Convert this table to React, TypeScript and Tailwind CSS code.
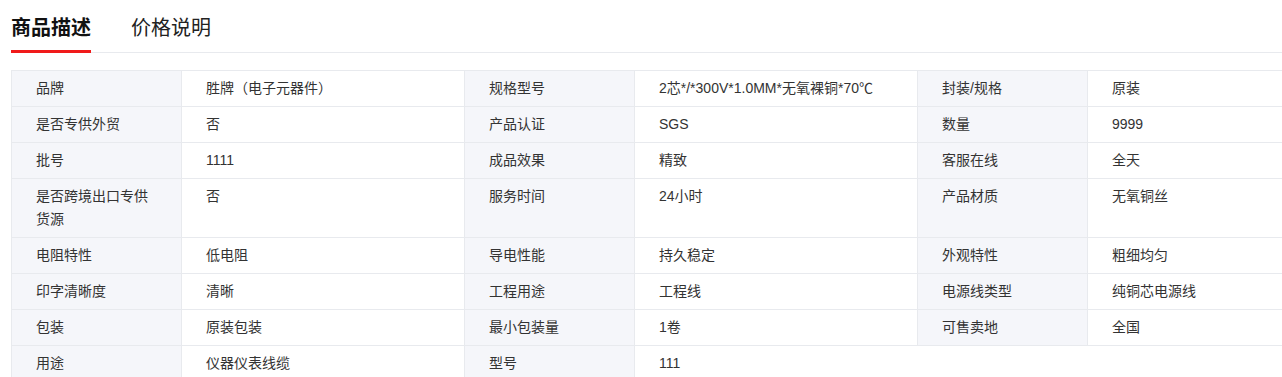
import React from "react";

type Pair = [string, string];

const rows: Pair[][] = [
  [["品牌", "胜牌（电子元器件）"], ["规格型号", "2芯*/*300V*1.0MM*无氧裸铜*70℃"], ["封装/规格", "原装"]],
  [["是否专供外贸", "否"], ["产品认证", "SGS"], ["数量", "9999"]],
  [["批号", "1111"], ["成品效果", "精致"], ["客服在线", "全天"]],
  [["是否跨境出口专供货源", "否"], ["服务时间", "24小时"], ["产品材质", "无氧铜丝"]],
  [["电阻特性", "低电阻"], ["导电性能", "持久稳定"], ["外观特性", "粗细均匀"]],
  [["印字清晰度", "清晰"], ["工程用途", "工程线"], ["电源线类型", "纯铜芯电源线"]],
  [["包装", "原装包装"], ["最小包装量", "1卷"], ["可售卖地", "全国"]],
  [["用途", "仪器仪表线缆"], ["型号", "111"]],
];

const Label = ({ text }: { text: string }) => (
  <div className="w-[170px] shrink-0 bg-[#f5f6fa] border-r border-[#e8eaee] px-6 py-[6px] leading-[23px]">
    {text}
  </div>
);

const Value = ({ text, last }: { text: string; last?: boolean }) => (
  <div
    className={
      last
        ? "w-[283px] shrink-0 px-6 py-[6px] leading-[23px]"
        : "w-[283px] shrink-0 border-r border-[#e8eaee] px-6 py-[6px] leading-[23px]"
    }
  >
    {text}
  </div>
);

export default function App() {
  return (
    <div
      className="w-full overflow-hidden bg-white text-[#333] pl-[11px]"
      style={{ fontFamily: '"Liberation Sans", "Noto Sans CJK SC", sans-serif' }}
    >
      <div className="flex gap-10 border-b border-[#e8eaee] w-[1400px]">
        <div className="relative pt-[17px] pb-[13px] text-[20px] leading-[22px] font-bold text-[#111]">
          商品描述
          <span className="absolute left-0 right-0 -bottom-px h-[3px] bg-[#f01a1a]" />
        </div>
        <div className="pt-[17px] pb-[13px] text-[20px] leading-[22px] text-[#222]">价格说明</div>
      </div>

      <div className="mt-[17px] w-[1400px] border-t border-l border-[#e8eaee] text-[14px]">
        {rows.map((row, i) => (
          <div key={i} className="flex border-b border-[#e8eaee]">
            {row.map(([k, v], j) => (
              <React.Fragment key={j}>
                <Label text={k} />
                <Value text={v} last={j === row.length - 1} />
              </React.Fragment>
            ))}
            <div className="flex-1" />
          </div>
        ))}
      </div>
    </div>
  );
}
